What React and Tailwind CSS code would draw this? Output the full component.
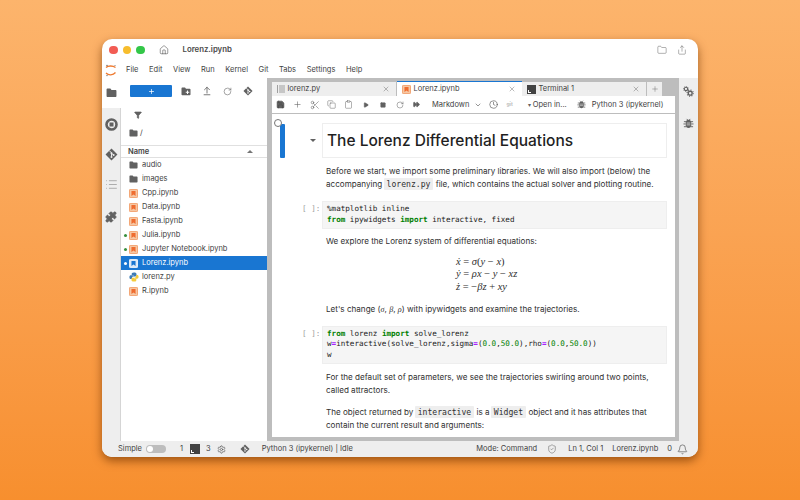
import React from "react";
import { Home, Folder, Share, X, Plus, Save, Scissors, Copy, Clipboard, Play, Square, RotateCw, FastForward, ChevronDown, Clock, ArrowUpFromLine, Filter, Puzzle, List, Settings, Bell, ShieldCheck } from "lucide-react";

const sans = "font-['Inter','Liberation_Sans',sans-serif]";
const mono = "font-['DejaVu_Sans_Mono',monospace]";

function Nb({ white }) {
  return (
    <svg width="9" height="9" viewBox="0 0 11 11" className="shrink-0">
      <rect x="0.5" y="0.5" width="10" height="10" rx="1" fill={white ? "#dbe9f8" : "#f6c7a3"} stroke={white ? "#fff" : "#f0935a"} strokeWidth="1" />
      <path d="M3 2.500h5v6L5.500 6.800 3 8.500z" fill={white ? "#1976d2" : "#ef6c2f"} />
    </svg>
  );
}
function FolderFill({ size = 10, color = "#616161", plus }) {
  return (
    <svg width={size} height={size * 0.9} viewBox="0 0 20 18" className="shrink-0">
      <path d="M1 2.500C1 1.700 1.700 1 2.500 1H8l2 2.500h7.500c.8 0 1.500.7 1.500 1.500v10c0 .8-.7 1.500-1.500 1.500h-15C1.700 16.500 1 15.800 1 15z" fill={color} />
      {plus && <path d="M13 7v7M9.500 10.500h7" stroke="#fff" strokeWidth="2" />}
    </svg>
  );
}
function Py() {
  return (
    <svg width="10" height="10" viewBox="0 0 24 24" className="shrink-0">
      <path d="M12 1C7 1 6.500 3 6.500 4.500V7H12v1H4.500C2.500 8 1 9.500 1 12.500S2.500 17 4.500 17H7v-3c0-2 1.500-3.500 3.500-3.500h5c1.500 0 2.500-1 2.500-2.500V4.500C18 2.500 16 1 12 1z" fill="#3f7cb5" />
      <path d="M12 23c5 0 5.500-2 5.500-3.500V17H12v-1h7.500c2 0 3.500-1.500 3.500-4.500S21.500 7 19.500 7H17v3c0 2-1.500 3.500-3.500 3.500h-5C7 13.500 6 14.500 6 16v3.500C6 21.500 8 23 12 23z" fill="#f4cb3c" />
    </svg>
  );
}
function GitDiamond({ size = 13, color = "#616161", bg = "#eee" }) {
  return (
    <svg width={size} height={size} viewBox="0 0 24 24" className="shrink-0">
      <path d="M12 1l11 11-11 11L1 12z" fill={color} />
      <path d="M8 5l4 4M12 9v7M12 10l4 3" stroke={bg} strokeWidth="1.800" fill="none" />
      <circle cx="12" cy="9.500" r="1.800" fill={bg} />
      <circle cx="12" cy="16.500" r="1.800" fill={bg} />
      <circle cx="16" cy="13" r="1.800" fill={bg} />
    </svg>
  );
}
function StopRing() {
  return (
    <svg width="13" height="13" viewBox="0 0 13 13" className="block">
      <circle cx="6.500" cy="6.500" r="5" fill="none" stroke="#616161" strokeWidth="2.600" />
      <rect x="4.500" y="4.500" width="4" height="4" fill="#616161" />
    </svg>
  );
}
function TermIcon({ size = 10 }) {
  return (
    <div style={{ width: size, height: size }} className="bg-[#424242] flex items-end justify-start pl-[1px] pb-[1px] shrink-0">
      <div className="w-[3px] h-[3px] border-l border-b border-white" />
    </div>
  );
}
function BugFill({ size = 11 }) {
  return (
    <svg width={size} height={size} viewBox="0 0 24 24" className="shrink-0 block">
      <path d="M12 4c3.500 0 6 2.500 6 6v6c0 3.500-2.500 6-6 6s-6-2.500-6-6v-6c0-3.500 2.500-6 6-6z" fill="#616161" />
      <path d="M2 8h5M17 8h5M1 13h5M18 13h5M2 19h5M17 19h5M8 2l3 3M16 2l-3 3" stroke="#616161" strokeWidth="2" />
      <path d="M8 11h8M8 15h8" stroke="#eee" strokeWidth="1.500" />
    </svg>
  );
}
function TwoGears() {
  return (
    <svg width="11" height="11" viewBox="0 0 13 13" className="block">
      <circle cx="3.500" cy="3.500" r="2" fill="none" stroke="#616161" strokeWidth="1.300" />
      <circle cx="3.500" cy="3.500" r="3" fill="none" stroke="#616161" strokeWidth="1" strokeDasharray="1 1.360" />
      <circle cx="8.500" cy="8.500" r="2.300" fill="none" stroke="#616161" strokeWidth="1.600" />
      <circle cx="8.500" cy="8.500" r="3.700" fill="none" stroke="#616161" strokeWidth="1.300" strokeDasharray="1.200 1.700" />
    </svg>
  );
}
function LinesIcon() {
  return (
    <svg width="8" height="8" viewBox="0 0 8 8" className="shrink-0">
      <path d="M.5 0v8" stroke="#9e9e9e" strokeWidth="1" />
      <path d="M2 1h6M2 3h6M2 5h6M2 7h6" stroke="#9e9e9e" strokeWidth="1" />
    </svg>
  );
}

const files = [
  ["f", "audio"],
  ["f", "images"],
  ["n", "Cpp.ipynb"],
  ["n", "Data.ipynb"],
  ["n", "Fasta.ipynb"],
  ["n", "Julia.ipynb", "run"],
  ["n", "Jupyter Notebook.ipynb", "run"],
  ["n", "Lorenz.ipynb", "sel"],
  ["p", "lorenz.py"],
  ["n", "R.ipynb"],
];

function Tab({ icon, label, active }) {
  return (
    <div className={`w-[125px] flex items-center pl-[5px] pr-[6px] gap-[2.500px] text-[7.500px] text-[#424242] whitespace-nowrap ${active ? "bg-white border-t border-t-[#1976d2] h-[15px] -mt-[1px]" : "bg-[#eeeeee] border-r border-r-[#bdbdbd] h-[14px]"}`}>
      {icon}
      <span className="flex-1">{label}</span>
      <X size={8} strokeWidth={1.300} color="#616161" />
    </div>
  );
}

const kw = "text-[#008000] font-bold";
const op = "text-[#aa22ff] font-bold";
const num = "text-[#008000]";

function Code({ children }) {
  return (
    <div className="flex">
      <div className={`${mono} w-[50px] shrink-0 pl-[30px] pt-[3px] text-[7.600px] leading-[10.500px] text-[#9e9e9e] whitespace-pre`}>[ ]:</div>
      <div className={`${mono} w-[345px] bg-[#f5f5f5] border border-[#eeeeee] pl-[4px] pt-[2px] pb-[3px] text-[7.600px] leading-[10.500px] text-[#212121] whitespace-pre`}>
        {children}
      </div>
    </div>
  );
}
function P({ children, className = "" }) {
  return <p className={`pl-[54px] text-[8.100px] leading-[13px] text-[#303030] whitespace-nowrap ${className}`}>{children}</p>;
}
function C({ children }) {
  return <code className={`${mono} bg-[#eeeeee] px-[3px] py-[1px] -ml-[1px] rounded-[1px] text-[8.100px]`}>{children}</code>;
}

const mathI = "font-['Liberation_Serif',serif]";

export default function App() {
  return (
    <div className={`${sans} w-[800px] h-[500px] overflow-hidden bg-gradient-to-b from-[#fcb46c] to-[#f78f2e] pt-[39px] pl-[102px]`}>
      <div className="w-[596px] h-[418px] rounded-[10px] bg-white overflow-hidden flex flex-col shadow-[0_4px_10px_rgba(110,50,0,0.65)]">
        {/* title bar */}
        <div className="h-[22px] flex items-center pl-[7px] pr-[11px] shrink-0">
          <div className="w-[8.500px] h-[8.500px] rounded-full bg-[#f25c54]" />
          <div className="w-[8.500px] h-[8.500px] rounded-full bg-[#f7bd2d] ml-[5px]" />
          <div className="w-[8.500px] h-[8.500px] rounded-full bg-[#33c748] ml-[5px]" />
          <Home size={10} strokeWidth={1.300} color="#424242" className="ml-[14px]" />
          <span className="ml-[14px] text-[7.800px] font-semibold text-[#4a4a4a]">Lorenz.ipynb</span>
          <div className="flex-1" />
          <Folder size={10} strokeWidth={1.100} color="#555" />
          <Share size={10} strokeWidth={1.100} color="#555" className="ml-[10px]" />
        </div>
        {/* menu */}
        <div className="h-[17px] flex items-center pl-[2px] pt-[1px] shrink-0">
          <svg width="14" height="14" viewBox="0 0 14 14" className="shrink-0">
            <path d="M2 4.500C4 2.500 9 2.500 11.500 4.500" stroke="#ee7a30" strokeWidth="1.300" fill="none" />
            <path d="M2 10C4.500 12.500 9 12.500 11.500 9.500" stroke="#ee7a30" strokeWidth="1.300" fill="none" />
            <circle cx="3" cy="2.500" r=".8" fill="#777" />
            <circle cx="11" cy="2.500" r=".6" fill="#777" />
            <circle cx="3" cy="12.500" r=".7" fill="#777" />
          </svg>
          <div className="ml-[8px] flex gap-[10.600px] text-[7.500px] text-[#424242]">
            {["File", "Edit", "View", "Run", "Kernel", "Git", "Tabs", "Settings", "Help"].map((m) => (
              <span key={m}>{m}</span>
            ))}
          </div>
        </div>
        {/* body */}
        <div className="flex-1 flex min-h-0">
          {/* left bar */}
          <div className="w-[19px] shrink-0 bg-[#eeeeee] flex flex-col items-center border-r border-[#d5d5d5]">
            <div className="w-[19px] h-[30px] bg-white flex items-center justify-center">
              <FolderFill size={11} />
            </div>
            <div className="mt-[9.500px]"><StopRing /></div>
            <div className="mt-[17px]"><GitDiamond size={13} /></div>
            <div className="mt-[17px]"><List size={13} strokeWidth={1.200} color="#888888" className="block" /></div>
            <div className="mt-[20px]"><Puzzle size={12} fill="#616161" color="#616161" className="block" /></div>
          </div>
          {/* file browser */}
          <div className="w-[146px] shrink-0 bg-white flex flex-col">
            <div className="h-[26px] flex items-center pl-[9px] shrink-0">
              <div className="w-[42px] h-[12px] rounded-[1px] bg-[#1976d2] flex items-center justify-center">
                <Plus size={7} color="#fff" strokeWidth={2.500} />
              </div>
              <div className="ml-[9px] flex items-center gap-[11px]">
                <FolderFill size={10} plus />
                <ArrowUpFromLine size={10} color="#616161" strokeWidth={2} />
                <RotateCw size={9} color="#616161" strokeWidth={1.500} />
                <GitDiamond size={10} bg="#fff" />
              </div>
            </div>
            <div className="h-[22px] flex items-center pl-[13px] shrink-0">
              <Filter size={8} fill="#616161" color="#616161" />
            </div>
            <div className="h-[19px] pb-[5px] flex items-center pl-[8px] gap-[2px] text-[7.500px] text-[#424242] shrink-0">
              <FolderFill size={9} /> <span>/</span>
            </div>
            <div className="h-[13px] border-t border-b border-[#e0e0e0] flex items-center justify-between pl-[7px] pr-[14px] text-[7.500px] font-semibold text-[#424242] shrink-0">
              <span>Name</span>
              <span className="w-0 h-0 border-x-[3px] border-x-transparent border-b-[3px] border-b-[#757575]" />
            </div>
            <div>
              {files.map(([t, n, s]) => (
                <div key={n} className={`h-[14px] flex items-center text-[7.500px] relative pl-[7px] gap-[3px] ${s === "sel" ? "bg-[#1976d2] text-white" : "text-[#424242]"}`}>
                  {s && <span className={`absolute left-[3px] top-[5.500px] w-[3px] h-[3px] rounded-full ${s === "sel" ? "bg-white" : "bg-[#388e3c]"}`} />}
                  <span className="w-[11px] flex justify-center">
                    {t === "f" ? <FolderFill size={9} /> : t === "p" ? <Py /> : <Nb white={s === "sel"} />}
                  </span>
                  <span>{n}</span>
                </div>
              ))}
            </div>
          </div>
          {/* main dock */}
          <div className="flex-1 min-w-0 bg-[#bdbdbd] pl-[5px] pr-[4px] pt-[4px] pb-[4px] flex flex-col">
            <div className="h-[14px] flex items-start shrink-0">
              <Tab icon={<LinesIcon />} label="lorenz.py" />
              <Tab icon={<Nb />} label="Lorenz.ipynb" active />
              <Tab icon={<TermIcon size={9} />} label="Terminal 1" />
              <div className="w-[15px] h-[14px] bg-[#eeeeee] flex items-center justify-center">
                <Plus size={8} strokeWidth={1.300} color="#616161" />
              </div>
            </div>
            <div className="flex-1 min-h-0 bg-white flex flex-col">
              {/* toolbar */}
              <div className="h-[18px] flex items-center border-b border-[#bdbdbd] shrink-0 text-[7.500px] text-[#424242] whitespace-nowrap">
                {[
                  <Save size={9} color="#424242" fill="#616161" strokeWidth={1.500} />,
                  <Plus size={9} color="#616161" strokeWidth={1.500} />,
                  <Scissors size={10} color="#616161" strokeWidth={1.300} />,
                  <Copy size={9} color="#616161" strokeWidth={1.300} />,
                  <Clipboard size={9} color="#616161" strokeWidth={1.300} />,
                  <Play size={6} color="#616161" fill="#616161" />,
                  <Square size={6} color="#616161" fill="#616161" />,
                  <RotateCw size={8} color="#616161" strokeWidth={1.500} />,
                  <FastForward size={7} color="#616161" fill="#616161" />,
                ].map((ic, i) => (
                  <span key={i} className="w-[17px] flex justify-center shrink-0">{ic}</span>
                ))}
                <span className="ml-[7px]">Markdown</span>
                <ChevronDown size={8} color="#616161" className="ml-[5px]" />
                <Clock size={9} color="#424242" className="ml-[7px]" strokeWidth={1.500} />
                <span className="ml-[8px] text-[5px] text-[#bdbdbd] font-bold">git</span>
                <span className="ml-[15px] text-[6px] text-[#616161]">▾</span>
                <span className="ml-[2px]">Open in...</span>
                <span className="ml-[10px]"><BugFill size={9} /></span>
                <span className="ml-[6px]">Python 3 (ipykernel)</span>
              </div>
              {/* notebook */}
              <div className="flex-1 min-h-0 overflow-hidden relative pt-[9px]">
                <div className="absolute left-[1.500px] top-[5px] w-[8px] h-[8px] rounded-full border border-[#757575] bg-white z-10" />
                <div className="absolute left-[8px] top-[10px] w-[5px] h-[34px] rounded-[1px] bg-[#1976d2]" />
                <div className="flex items-center">
                  <div className="w-[50px] shrink-0 pl-[38px]">
                    <span className="block w-0 h-0 border-x-[3px] border-x-transparent border-t-[3px] border-t-[#616161]" />
                  </div>
                  <div className="w-[345px] h-[35px] border border-[#eeeeee] pl-[4px] pt-[1px] flex items-center text-[15.500px] font-medium text-[#1f1f1f] whitespace-nowrap">The Lorenz Differential Equations</div>
                </div>
                <P className="mt-[6.500px]">Before we start, we import some preliminary libraries. We will also import (below) the</P>
                <P>accompanying <C>lorenz.py</C> file, which contains the actual solver and plotting routine.</P>
                <div className="mt-[10.500px]">
                  <Code>
                    <span>%matplotlib inline{"\n"}</span>
                    <span className={kw}>from</span> ipywidgets <span className={kw}>import</span> interactive, fixed
                  </Code>
                </div>
                <P className="mt-[5.500px]">We explore the Lorenz system of differential equations:</P>
                <div className="mt-[8px] flex flex-col items-center pl-[54px] pr-[22px] font-['Liberation_Serif',serif] text-[10.500px] leading-[12.700px] text-[#303030]">
                  <div className="w-[67px] italic whitespace-nowrap">ẋ <span className="not-italic">=</span> σ<span className="not-italic">(</span>y <span className="not-italic">−</span> x<span className="not-italic">)</span></div>
                  <div className="w-[67px] italic whitespace-nowrap">ẏ <span className="not-italic">=</span> ρx <span className="not-italic">−</span> y <span className="not-italic">−</span> xz</div>
                  <div className="w-[67px] italic whitespace-nowrap">ż <span className="not-italic">=</span> <span className="not-italic">−</span>βz <span className="not-italic">+</span> xy</div>
                </div>
                <P className="mt-[9px]">Let's change (<i className={mathI}>σ</i>, <i className={mathI}>β</i>, <i className={mathI}>ρ</i>) with ipywidgets and examine the trajectories.</P>
                <div className="mt-[10px]">
                  <Code>
                    <span className={kw}>from</span> lorenz <span className={kw}>import</span> solve_lorenz{"\n"}
                    w<span className={op}>=</span>interactive(solve_lorenz,sigma<span className={op}>=</span>(<span className={num}>0.0</span>,<span className={num}>50.0</span>),rho<span className={op}>=</span>(<span className={num}>0.0</span>,<span className={num}>50.0</span>)){"\n"}
                    w
                  </Code>
                </div>
                <P className="mt-[7px]">For the default set of parameters, we see the trajectories swirling around two points,</P>
                <P>called attractors.</P>
                <P className="mt-[8.500px]">The object returned by <C>interactive</C> is a <C>Widget</C> object and it has attributes that</P>
                <P>contain the current result and arguments:</P>
              </div>
            </div>
          </div>
          {/* right bar */}
          <div className="w-[19px] shrink-0 bg-[#eeeeee] flex flex-col items-center pt-[8px]">
            <TwoGears />
            <div className="mt-[21px]"><BugFill size={11} /></div>
          </div>
        </div>
        {/* status */}
        <div className="h-[16px] shrink-0 bg-[#eeeeee] flex items-center pl-[16px] pr-[10px] text-[7.500px] text-[#424242]">
          <span>Simple</span>
          <div className="ml-[4px] w-[20px] h-[8px] rounded-full bg-[#bdbdbd] flex items-center pl-[1px]">
            <div className="w-[6px] h-[6px] rounded-full bg-white" />
          </div>
          <span className="ml-[14px]">1</span>
          <div className="ml-[7px]"><TermIcon size={10} /></div>
          <span className="ml-[6px]">3</span>
          <Settings size={9} color="#616161" className="ml-[6px]" />
          <div className="ml-[14px]"><GitDiamond size={10} /></div>
          <span className="ml-[12px]">Python 3 (ipykernel) | Idle</span>
          <div className="flex-1" />
          <span>Mode: Command</span>
          <ShieldCheck size={10} color="#616161" strokeWidth={1.300} className="ml-[10px]" />
          <span className="ml-[11px]">Ln 1, Col 1</span>
          <span className="ml-[9px]">Lorenz.ipynb</span>
          <span className="ml-[9px]">0</span>
          <Bell size={11} color="#424242" strokeWidth={1.300} className="ml-[5px]" />
        </div>
      </div>
    </div>
  );
}
